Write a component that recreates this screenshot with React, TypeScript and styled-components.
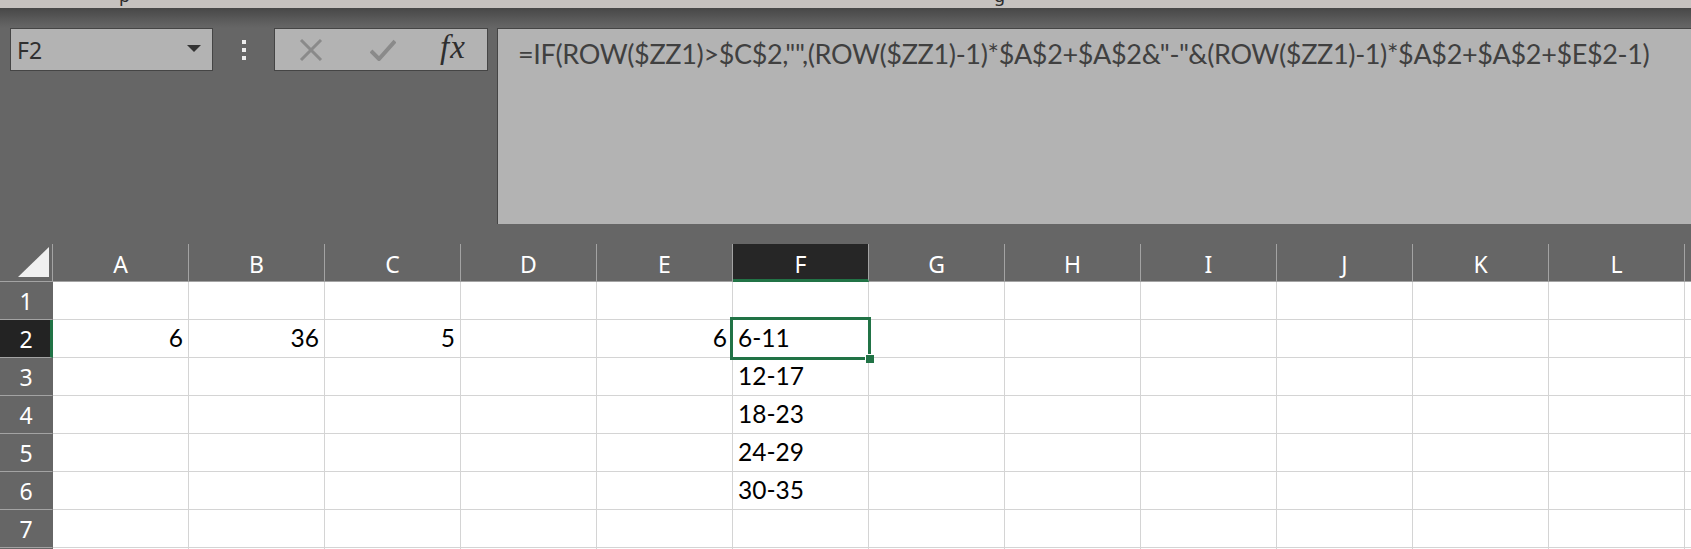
import React from "react";
import styled, { createGlobalStyle } from "styled-components";

const GlobalStyle = createGlobalStyle`
  html, body {
    margin: 0;
    padding: 0;
    background: #666666;
    overflow: hidden;
  }
`;

// the last entry is the sliver of the next column at the window edge
const COLS = ["A", "B", "C", "D", "E", "F", "G", "H", "I", "J", "K", "L", ""];
const ROWS = 8;

// values that are typed into the sheet, keyed by cell name
const cells: Record<string, { v: string; num?: boolean }> = {
  A2: { v: "6", num: true },
  B2: { v: "36", num: true },
  C2: { v: "5", num: true },
  E2: { v: "6", num: true },
  F2: { v: "6-11" },
  F3: { v: "12-17" },
  F4: { v: "18-23" },
  F5: { v: "24-29" },
  F6: { v: "30-35" },
};

const ACTIVE_COL = "F";
const ACTIVE_ROW = 2;

const FORMULA =
  '=IF(ROW($ZZ1)>$C$2,"",(ROW($ZZ1)-1)*$A$2+$A$2&"-"&(ROW($ZZ1)-1)*$A$2+$A$2+$E$2-1)';

const Window = styled.div`
  width: 1691px;
  height: 549px;
  background: #666666;
  overflow: hidden;
  display: flex;
  flex-direction: column;
`;

const TitleStrip = styled.div`
  height: 8px;
  flex: none;
  background: #c6c2bf;
  overflow: hidden;
  display: flex;
  font-family: "Noto Sans", sans-serif;
  font-size: 18px;
  line-height: 18px;
  color: #2b2b2b;
`;

const TitleGlyph = styled.span<{ left: number }>`
  margin-left: ${(p) => p.left}px;
  margin-top: -14px;
`;

const FormulaArea = styled.div`
  flex: none;
  height: 216px;
  padding-top: 20px;
  box-sizing: border-box;
  background: linear-gradient(#474747 0px, #5e5e5e 14px, #666666 20px, #666666);
  display: flex;
  align-items: flex-start;
`;

const NameBox = styled.div`
  margin-left: 10px;
  width: 203px;
  height: 43px;
  box-sizing: border-box;
  border: 1px solid #454545;
  background: #b3b3b3;
  display: flex;
  align-items: center;
  justify-content: space-between;
  padding: 0 11px 0 6px;
  font-family: "Noto Sans", "Open Sans", sans-serif;
  font-size: 23px;
  color: #303030;
`;

const DropArrow = styled.span`
  width: 0;
  height: 0;
  border-left: 7px solid transparent;
  border-right: 7px solid transparent;
  border-top: 7px solid #333333;
  margin-top: -3px;
`;

const Dots = styled.div`
  width: 61px;
  height: 43px;
  display: flex;
  flex-direction: column;
  align-items: center;
  justify-content: center;
  gap: 4px;
`;

const Dot = styled.span`
  width: 4px;
  height: 4px;
  background: #ededed;
`;

const ButtonBox = styled.div`
  width: 214px;
  height: 43px;
  box-sizing: border-box;
  border: 1px solid #454545;
  background: #b3b3b3;
  display: flex;
  align-items: center;
  padding-left: 24px;
`;

const IconSlot = styled.span<{ w: number }>`
  width: ${(p) => p.w}px;
  display: flex;
  align-items: center;
`;

const Fx = styled.span`
  font-family: "Liberation Serif", "DejaVu Serif", serif;
  font-style: italic;
  font-size: 33px;
  color: #2e2e2e;
  line-height: 1;
  margin-top: -4px;
  letter-spacing: 1px;
`;

const FormulaBox = styled.div`
  margin-left: 9px;
  flex: 1;
  height: 196px;
  box-sizing: border-box;
  border-top: 1px solid #454545;
  border-left: 1px solid #454545;
  background: #b3b3b3;
  padding: 8px 0 0 20px;
  font-family: "Lato", "Open Sans", sans-serif;
  font-size: 27px;
  letter-spacing: -0.35px;
  color: #404040;
  white-space: nowrap;
  overflow: hidden;
`;

const Sheet = styled.div`
  flex: none;
  margin-top: 20px;
  display: grid;
  grid-template-columns: 53px repeat(12, 136px) 1fr;
  grid-auto-rows: 38px;
`;

const Corner = styled.div`
  border-right: 1px solid #a3a3a3;
  border-bottom: 1px solid #a3a3a3;
  display: flex;
  align-items: flex-end;
  justify-content: flex-end;
  padding: 0 3px 4px 0;
`;

const ColHead = styled.div<{ active?: boolean }>`
  box-sizing: border-box;
  background: ${(p) => (p.active ? "#262626" : "#666666")};
  border-right: 1px solid #a3a3a3;
  border-bottom: ${(p) => (p.active ? "3px solid #217346" : "1px solid #a3a3a3")};
  display: flex;
  align-items: center;
  justify-content: center;
  padding-top: ${(p) => (p.active ? "4px" : "2px")};
  font-family: "Noto Sans", "Open Sans", sans-serif;
  font-size: 23px;
  color: #ffffff;
`;

const RowHead = styled.div<{ active?: boolean }>`
  box-sizing: border-box;
  background: ${(p) => (p.active ? "#232323" : "#666666")};
  border-bottom: 1px solid #a3a3a3;
  border-right: ${(p) => (p.active ? "3px solid #217346" : "1px solid #666666")};
  display: flex;
  align-items: center;
  justify-content: center;
  padding-left: ${(p) => (p.active ? "2px" : "0")};
  font-family: "Noto Sans", "Open Sans", sans-serif;
  font-size: 23px;
  color: #ffffff;
`;

const Cell = styled.div<{ num?: boolean; selected?: boolean }>`
  position: relative;
  z-index: ${(p) => (p.selected ? 2 : "auto")};
  box-sizing: border-box;
  background: #ffffff;
  border-right: 1px solid #d4d4d4;
  border-bottom: 1px solid #d4d4d4;
  display: flex;
  align-items: flex-end;
  justify-content: ${(p) => (p.num ? "flex-end" : "flex-start")};
  padding: 0 5px 4px 5px;
  font-family: "Lato", "Open Sans", sans-serif;
  font-size: 24.5px;
  line-height: 30px;
  color: #000000;
  white-space: nowrap;
`;

const Selection = styled.div`
  position: absolute;
  left: -3px;
  top: -3px;
  right: -3px;
  bottom: -3px;
  border: 3px solid #217346;
  pointer-events: none;
`;

const FillHandle = styled.span`
  position: absolute;
  right: -6px;
  bottom: -6px;
  width: 8px;
  height: 8px;
  background: #217346;
  border: 1.5px solid #ffffff;
  border-right: none;
  border-bottom: none;
`;

const CancelIcon = () => (
  <svg width="24" height="22" viewBox="0 0 24 22">
    <path d="M2 1 L22 21 M22 1 L2 21" stroke="#8a8a8a" strokeWidth="3" fill="none" />
  </svg>
);

const EnterIcon = () => (
  <svg width="26" height="22" viewBox="0 0 26 22">
    <path d="M1 12 L9 20 L25 2" stroke="#8a8a8a" strokeWidth="4" fill="none" />
  </svg>
);

const CornerTriangle = () => (
  <svg width="31" height="30" viewBox="0 0 31 30">
    <path d="M31 0 L31 30 L0 30 Z" fill="#f0f0f0" />
  </svg>
);

const App = () => {
  const rows = Array.from({ length: ROWS }, (_, i) => i + 1);

  return (
    <>
      <GlobalStyle />
      <Window>
        <TitleStrip>
          <TitleGlyph left={119}>p</TitleGlyph>
          <TitleGlyph left={864}>g</TitleGlyph>
        </TitleStrip>

        <FormulaArea>
          <NameBox>
            <span>F2</span>
            <DropArrow />
          </NameBox>
          <Dots>
            <Dot />
            <Dot />
            <Dot />
          </Dots>
          <ButtonBox>
            <IconSlot w={71}>
              <CancelIcon />
            </IconSlot>
            <IconSlot w={70}>
              <EnterIcon />
            </IconSlot>
            <IconSlot w={40}>
              <Fx>fx</Fx>
            </IconSlot>
          </ButtonBox>
          <FormulaBox>{FORMULA}</FormulaBox>
        </FormulaArea>

        <Sheet>
          <Corner>
            <CornerTriangle />
          </Corner>
          {COLS.map((c, i) => (
            <ColHead key={`h${i}`} active={c === ACTIVE_COL}>
              {c}
            </ColHead>
          ))}

          {rows.map((r) => (
            <React.Fragment key={r}>
              <RowHead active={r === ACTIVE_ROW}>{r}</RowHead>
              {COLS.map((c, i) => {
                const id = `${c}${r}`;
                const data = c ? cells[id] : undefined;
                const isActive = c === ACTIVE_COL && r === ACTIVE_ROW;
                return (
                  <Cell key={`${i}-${r}`} num={data?.num} selected={isActive}>
                    {data?.v}
                    {isActive && (
                      <Selection>
                        <FillHandle />
                      </Selection>
                    )}
                  </Cell>
                );
              })}
            </React.Fragment>
          ))}
        </Sheet>
      </Window>
    </>
  );
};

export default App;
